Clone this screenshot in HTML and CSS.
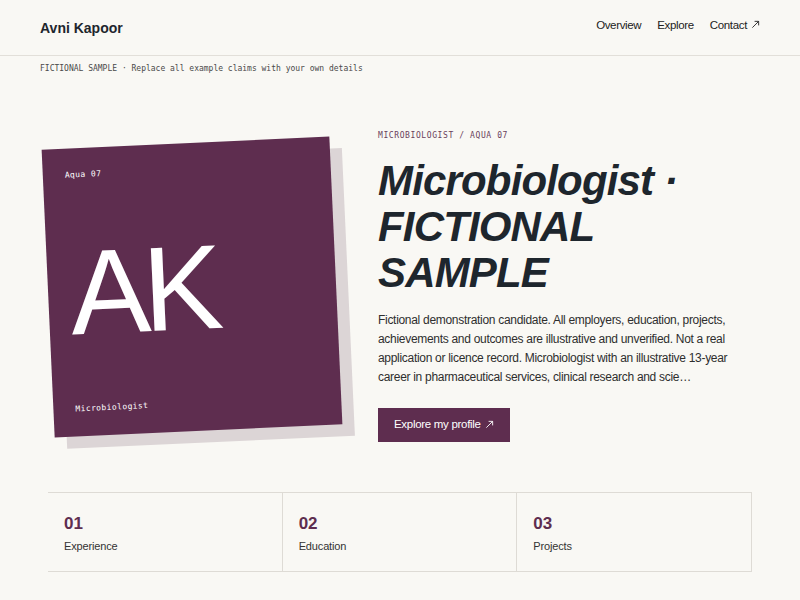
FILE: index.html
```html
<!DOCTYPE html>
<html lang="en">
<head>
<meta charset="utf-8">
<title>Avni Kapoor</title>
<link rel="stylesheet" href="styles.css">
</head>
<body>
<header class="site-header">
  <div class="brand">Avni Kapoor</div>
  <nav class="nav">
    <a href="#overview">Overview</a>
    <a href="#explore">Explore</a>
    <a href="#contact">Contact <svg class="arrow" viewBox="0 0 10 10" aria-hidden="true"><path d="M1.5 8.5 L8.5 1.5 M4 1.5 H8.5 V6"/></svg></a>
  </nav>
</header>
<div class="notice">FICTIONAL SAMPLE · Replace all example claims with your own details</div>
<main class="main">
  <section class="hero">
    <div class="card-col">
      <div class="card">
        <span class="card-label">Aqua 07</span>
        <span class="monogram">AK</span>
        <span class="card-label">Microbiologist</span>
      </div>
    </div>
    <div class="intro">
      <p class="eyebrow">MICROBIOLOGIST / AQUA 07</p>
      <h1 class="title">Microbiologist · FICTIONAL SAMPLE</h1>
      <p class="lead">Fictional demonstration candidate. All employers, education, projects, achievements and outcomes are illustrative and unverified. Not a real application or licence record. Microbiologist with an illustrative 13-year career in pharmaceutical services, clinical research and scie…</p>
      <a class="button" href="#explore">Explore my profile <svg class="arrow" viewBox="0 0 10 10" aria-hidden="true"><path d="M1.5 8.5 L8.5 1.5 M4 1.5 H8.5 V6"/></svg></a>
    </div>
  </section>
  <section class="stats">
    <div class="stat"><div class="stat-num">01</div><div class="stat-label">Experience</div></div>
    <div class="stat"><div class="stat-num">02</div><div class="stat-label">Education</div></div>
    <div class="stat"><div class="stat-num">03</div><div class="stat-label">Projects</div></div>
  </section>
</main>
</body>
</html>
```
FILE: styles.css
```css
* { box-sizing: border-box; }

body {
  margin: 0;
  background: #f9f8f4;
  color: #1e262d;
  font-family: "Liberation Sans", Arial, sans-serif;
}

.site-header {
  display: flex;
  justify-content: space-between;
  align-items: center;
  height: 56px;
  padding: 0 40px;
  border-bottom: 1px solid #e2dfd9;
}

.brand {
  font-size: 14px;
  font-weight: 700;
  color: #1e262d;
}

.nav {
  display: flex;
  gap: 16px;
  padding-bottom: 6px;
  font-size: 11.5px;
  letter-spacing: -0.35px;
}

.nav a {
  display: inline-flex;
  align-items: center;
  gap: 4px;
  color: #222;
  text-decoration: none;
}

.arrow {
  width: 9px;
  height: 9px;
  fill: none;
  stroke: currentColor;
  stroke-width: 1;
}

.notice {
  padding: 7px 40px 5px;
  font-family: "DejaVu Sans Mono", monospace;
  font-size: 8px;
  line-height: 12px;
  color: #4a4a4a;
}

.main {
  padding: 50px 48px 0;
}

.hero {
  display: grid;
  grid-template-columns: 288px 1fr;
  column-gap: 42px;
  align-items: center;
}

.card-col {
  padding-top: 2px;
}

.card {
  width: 288px;
  height: 288px;
  padding: 22px;
  display: flex;
  flex-direction: column;
  justify-content: space-between;
  align-items: flex-start;
  background: #5e2d4f;
  color: #fff;
  transform: rotate(-2.6deg);
  box-shadow: 12px 12px 0 #dcd5d6;
}

.card-label {
  font-family: "DejaVu Sans Mono", monospace;
  font-size: 8px;
  line-height: 10px;
  letter-spacing: 0.4px;
}

.monogram {
  font-size: 120px;
  line-height: 1;
  letter-spacing: -0.06em;
  font-weight: 400;
}

.intro {
  display: flex;
  flex-direction: column;
  align-items: flex-start;
}

.eyebrow {
  margin: 0;
  font-family: "DejaVu Sans Mono", monospace;
  font-size: 8px;
  line-height: 12px;
  letter-spacing: 0.6px;
  color: #6a3f5c;
}

.title {
  margin: 16px 0 0;
  font-size: 42px;
  line-height: 1.1;
  font-style: italic;
  font-weight: 700;
  letter-spacing: -0.02em;
  color: #1e262d;
}

.lead {
  margin: 14px 0 0;
  font-size: 12px;
  line-height: 19px;
  letter-spacing: -0.3px;
  color: #2e2e2e;
}

.button {
  display: inline-flex;
  align-items: center;
  gap: 4px;
  margin-top: 21px;
  padding: 8px 16px 9px;
  background: #5e2d4f;
  color: #fff;
  font-size: 11.5px;
  line-height: 17px;
  letter-spacing: -0.3px;
  text-decoration: none;
}

.stats {
  display: grid;
  grid-template-columns: repeat(3, 1fr);
  margin-top: 50px;
  border-top: 1px solid #dedbd5;
  border-bottom: 1px solid #dedbd5;
}

.stat {
  padding: 21px 16px 17px;
  border-right: 1px solid #dedbd5;
}

.stat-num {
  font-size: 17px;
  line-height: 20px;
  font-weight: 700;
  color: #5e2d4f;
}

.stat-label {
  margin-top: 5px;
  font-size: 11px;
  line-height: 15px;
  letter-spacing: -0.15px;
  color: #333;
}
```
